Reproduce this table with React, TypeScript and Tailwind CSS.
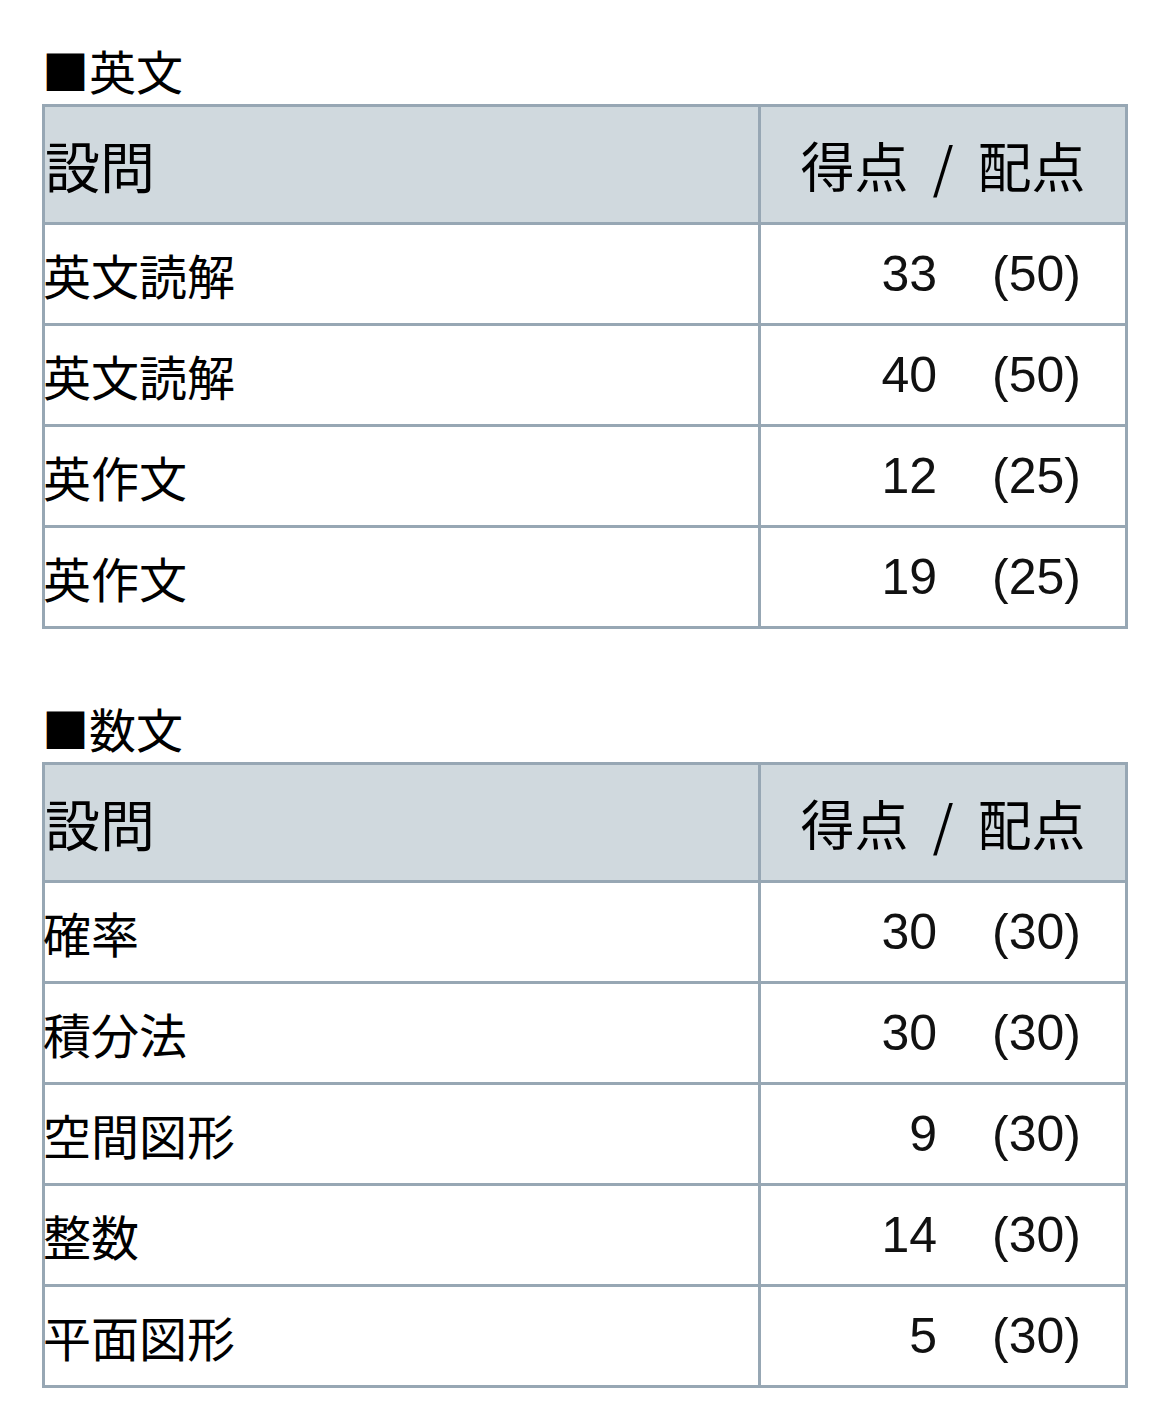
type Row = { label: string; score: number; max: number };

const english: Row[] = [
  { label: "英文読解", score: 33, max: 50 },
  { label: "英文読解", score: 40, max: 50 },
  { label: "英作文", score: 12, max: 25 },
  { label: "英作文", score: 19, max: 25 },
];

const math: Row[] = [
  { label: "確率", score: 30, max: 30 },
  { label: "積分法", score: 30, max: 30 },
  { label: "空間図形", score: 9, max: 30 },
  { label: "整数", score: 14, max: 30 },
  { label: "平面図形", score: 5, max: 30 },
];

function ScoreTable({ title, rows }: { title: string; rows: Row[] }) {
  return (
    <section>
      <h2 className="h-[68px] text-[47px] leading-[68px] text-black">
        ■{title}
      </h2>
      <table className="w-[1086px] table-fixed border-collapse border-[3px] border-[#97a7b4]">
        <colgroup>
          <col className="w-[716px]" />
          <col />
        </colgroup>
        <thead>
          <tr className="h-[118px] bg-[#d0d9de]">
            <th className="border-[3px] border-[#97a7b4] p-0 text-left text-[55px] font-normal">
              設問
            </th>
            <th className="border-[3px] border-[#97a7b4] p-0 text-center text-[54px] font-normal">
              得点<span className="mx-[24px]">/</span>配点
            </th>
          </tr>
        </thead>
        <tbody>
          {rows.map((row, i) => (
            <tr key={i} className="h-[101px]">
              <td className="border-[3px] border-[#97a7b4] p-0 text-[48px]">
                <span className="-ml-[2px]">{row.label}</span>
              </td>
              <td
                className="border-[3px] border-[#97a7b4] p-0 pr-[44px] text-right text-[50px] text-[#111]"
                style={{ fontFamily: '"Liberation Sans", Arial, sans-serif' }}
              >
                {row.score}
                <span className="inline-block w-[55px]" />({row.max})
              </td>
            </tr>
          ))}
        </tbody>
      </table>
    </section>
  );
}

export default function App() {
  return (
    <div
      className="min-h-[1422px] bg-white px-[42px] pt-[36px] text-black"
      style={{ fontFamily: '"Noto Sans CJK JP", "Noto Sans", sans-serif' }}
    >
      <ScoreTable title="英文" rows={english} />
      <div className="h-[65px]" />
      <ScoreTable title="数文" rows={math} />
    </div>
  );
}
